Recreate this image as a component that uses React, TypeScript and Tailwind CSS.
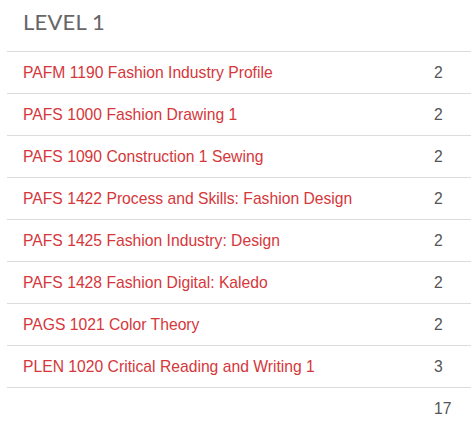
const rows: [string, string][] = [
  ["PAFM 1190 Fashion Industry Profile", "2"],
  ["PAFS 1000 Fashion Drawing 1", "2"],
  ["PAFS 1090 Construction 1 Sewing", "2"],
  ["PAFS 1422 Process and Skills: Fashion Design", "2"],
  ["PAFS 1425 Fashion Industry: Design", "2"],
  ["PAFS 1428 Fashion Digital: Kaledo", "2"],
  ["PAGS 1021 Color Theory", "2"],
  ["PLEN 1020 Critical Reading and Writing 1", "3"],
];

export default function App() {
  return (
    <div className="w-[475px] h-[421px] bg-white overflow-hidden">
      <h2 className="pl-[23px] pt-[8px] h-[51px] text-[22px] leading-[28px] text-[#666] font-['Lato','Open_Sans',sans-serif] tracking-[0.2px]">
        LEVEL 1
      </h2>
      <div className="ml-[7px] mr-[4px] font-['Liberation_Sans',Arial,sans-serif] text-[15.7px]">
        {rows.map(([name, cr]) => (
          <div key={name} className="flex items-center h-[42px] border-t border-[#dcdcdc]">
            <div className="flex-1 pl-[16px] text-[#d5373b]">{name}</div>
            <div className="w-[37px] text-[#555]">{cr}</div>
          </div>
        ))}
        <div className="flex items-center h-[42px] border-t border-[#dcdcdc]">
          <div className="flex-1" />
          <div className="w-[37px] text-[#555]">17</div>
        </div>
      </div>
    </div>
  );
}
